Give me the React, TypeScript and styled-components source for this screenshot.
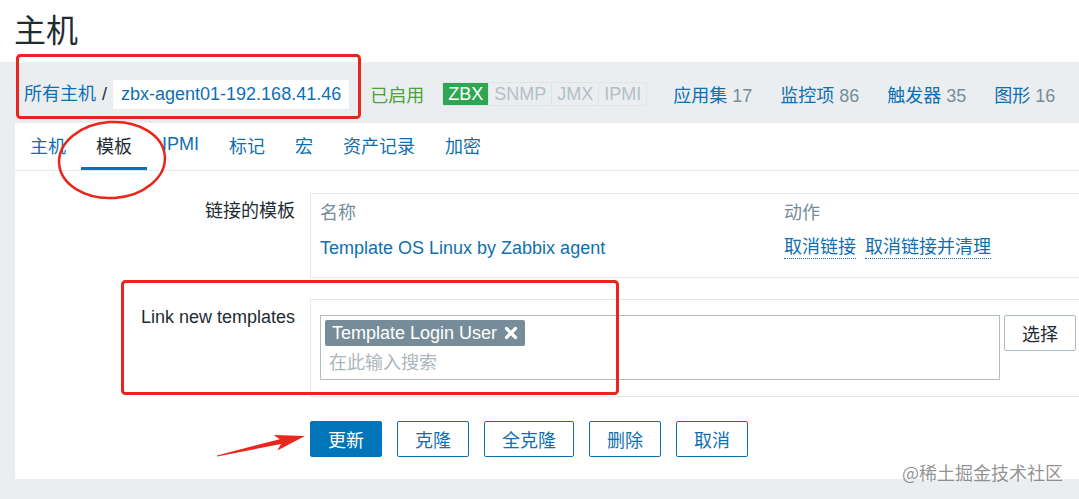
import React from "react";
import styled, { createGlobalStyle } from "styled-components";

const GlobalStyle = createGlobalStyle`
  html, body {
    margin: 0;
    padding: 0;
    background: #ebeef0;
    overflow: hidden;
  }
  body {
    font-family: "Liberation Sans", "Noto Sans CJK SC", sans-serif;
    font-size: 18px;
    color: #1f2c33;
  }
  * { box-sizing: border-box; }
`;

const BLUE = "#0f6fb0";
const GREY = "#768d99";
const LINE = "#e6e9eb";
const RED = "#e8261d";

const Page = styled.div`
  position: relative;
  width: 1079px;
  height: 499px;
  background: #ebeef0;
  overflow: hidden;
`;

const Header = styled.header`
  height: 62px;
  background: #fff;
  display: flex;
  align-items: center;
  padding-left: 14px;
`;

const Title = styled.h1`
  margin: 0;
  font-size: 32px;
  font-weight: 400;
  line-height: 36px;
  color: #1f2c33;
`;

const InfoBar = styled.div`
  height: 61px;
  display: flex;
  align-items: center;
  padding: 3px 0 0 24px;
  white-space: nowrap;
`;

const Link = styled.span`
  color: ${BLUE};
  line-height: 24px;
`;

const Sep = styled.span`
  padding: 0 6px;
  color: #1f2c33;
`;

const HostBox = styled.span`
  background: #fff;
  color: ${BLUE};
  height: 29px;
  line-height: 29px;
  padding: 0 8px;
`;

const Status = styled.span`
  margin-left: 21px;
  color: #4f9f3f;
`;

const Badges = styled.div`
  margin-left: 18px;
  display: flex;
  height: 24px;
  border: 1px solid #dfe4e7;
  border-radius: 2px;
  overflow: hidden;
`;

const Badge = styled.span<{ $on?: boolean }>`
  display: flex;
  align-items: center;
  padding: 0 5px;
  background: ${(p) => (p.$on ? "#2fa752" : "transparent")};
  color: ${(p) => (p.$on ? "#fff" : "#b4c0c6")};
  border-left: ${(p) => (p.$on ? "none" : "1px solid #dfe4e7")};
  line-height: 22px;
`;

const Counts = styled.div`
  display: flex;
  gap: 28px;
  margin-left: 26px;
`;

const Count = styled.span`
  color: ${BLUE};
  & b {
    font-weight: 400;
    color: ${GREY};
    margin-left: 5px;
  }
`;

const Panel = styled.section`
  margin-left: 15px;
  width: 1100px;
  height: 356px;
  background: #fff;
`;

const TabBar = styled.nav`
  display: flex;
  height: 48px;
  border-bottom: 1px solid ${LINE};
`;

const Tab = styled.span<{ $active?: boolean }>`
  position: relative;
  display: flex;
  align-items: center;
  padding: 0 15px 4px;
  color: ${(p) => (p.$active ? "#1f2c33" : BLUE)};
  &::after {
    content: "";
    display: ${(p) => (p.$active ? "block" : "none")};
    position: absolute;
    left: 0;
    right: 0;
    bottom: 0;
    height: 3px;
    background: #0275b8;
  }
`;

const Form = styled.div`
  display: grid;
  grid-template-columns: 280px 1fr;
  column-gap: 15px;
  row-gap: 21px;
  padding-top: 22px;
`;

const Label = styled.div`
  text-align: right;
  padding-top: 6px;
  line-height: 24px;
`;

const Box = styled.div<{ $pad: string }>`
  border: 1px solid ${LINE};
  border-right: none;
  padding: ${(p) => p.$pad};
`;

const Table = styled.div`
  display: grid;
  grid-template-columns: 464px auto;
  row-gap: 11px;
  line-height: 24px;
`;

const Th = styled.span`
  color: ${GREY};
`;

const Actions = styled.span`
  display: flex;
  gap: 9px;
`;

const Dotted = styled.span`
  color: ${BLUE};
  line-height: 22px;
  border-bottom: 1px dotted ${BLUE};
  align-self: flex-start;
`;

const PickRow = styled.div`
  display: flex;
  align-items: flex-start;
`;

const MultiSelect = styled.div`
  flex: none;
  width: 680px;
  border: 1px solid #b3bcc1;
  padding: 4px 5px 4px 4px;
`;

const Tag = styled.span`
  display: inline-flex;
  align-items: center;
  gap: 7px;
  height: 26px;
  padding: 0 7px;
  background: ${GREY};
  color: #fff;
  border-radius: 2px;
`;

const Placeholder = styled.div`
  color: #acb6bb;
  line-height: 24px;
  padding: 5px 0 0 4px;
`;

const Button = styled.button<{ $primary?: boolean }>`
  flex: none;
  height: 36px;
  padding: 0 17px;
  font: inherit;
  font-size: 18px;
  white-space: nowrap;
  border-radius: 2px;
  border: 1px solid ${(p) => (p.$primary ? "#0275b8" : BLUE)};
  background: ${(p) => (p.$primary ? "#0275b8" : "#fff")};
  color: ${(p) => (p.$primary ? "#fff" : BLUE)};
`;

const SelectButton = styled(Button)`
  margin-left: 4px;
  border-color: #acbbc2;
  color: #1f2c33;
`;

const ButtonRow = styled.div`
  display: flex;
  gap: 15px;
  margin-top: 3px;
`;

const Watermark = styled.div`
  position: absolute;
  left: 902px;
  top: 460px;
  font-size: 18px;
  line-height: 24px;
  color: rgba(110, 110, 110, 0.75);
  font-family: "Noto Sans CJK SC", sans-serif;
`;

const Marks = styled.svg`
  position: absolute;
  left: 0;
  top: 0;
  pointer-events: none;
`;

function CloseX() {
  return (
    <svg width="14" height="14" viewBox="0 0 14 14">
      <path d="M2.5 2.5 L11.5 11.5 M11.5 2.5 L2.5 11.5" stroke="#fff" strokeWidth="3.2" strokeLinecap="round" />
    </svg>
  );
}

const tabs = ["主机", "模板", "IPMI", "标记", "宏", "资产记录", "加密"];
const counts: [string, number][] = [
  ["应用集", 17],
  ["监控项", 86],
  ["触发器", 35],
  ["图形", 16],
];

export default function App() {
  return (
    <Page>
      <GlobalStyle />
      <Header>
        <Title>主机</Title>
      </Header>
      <InfoBar>
        <Link>所有主机</Link>
        <Sep>/</Sep>
        <HostBox>zbx-agent01-192.168.41.46</HostBox>
        <Status>已启用</Status>
        <Badges>
          <Badge $on>ZBX</Badge>
          <Badge>SNMP</Badge>
          <Badge>JMX</Badge>
          <Badge>IPMI</Badge>
        </Badges>
        <Counts>
          {counts.map(([name, n]) => (
            <Count key={name}>
              {name}
              <b>{n}</b>
            </Count>
          ))}
        </Counts>
      </InfoBar>
      <Panel>
        <TabBar>
          {tabs.map((t) => (
            <Tab key={t} $active={t === "模板"}>
              {t}
            </Tab>
          ))}
        </TabBar>
        <Form>
          <Label>链接的模板</Label>
          <Box $pad="7px 9px 17px">
            <Table>
              <Th>名称</Th>
              <Th>动作</Th>
              <Link>Template OS Linux by Zabbix agent</Link>
              <Actions>
                <Dotted>取消链接</Dotted>
                <Dotted>取消链接并清理</Dotted>
              </Actions>
            </Table>
          </Box>

          <Label>Link new templates</Label>
          <Box $pad="15px 9px 16px">
            <PickRow>
              <MultiSelect>
                <Tag>
                  Template Login User
                  <CloseX />
                </Tag>
                <Placeholder>在此输入搜索</Placeholder>
              </MultiSelect>
              <SelectButton>选择</SelectButton>
            </PickRow>
          </Box>

          <div />
          <ButtonRow>
            <Button $primary>更新</Button>
            <Button>克隆</Button>
            <Button>全克隆</Button>
            <Button>删除</Button>
            <Button>取消</Button>
          </ButtonRow>
        </Form>
      </Panel>

      <Watermark>@稀土掘金技术社区</Watermark>

      <Marks width="1079" height="499" viewBox="0 0 1079 499">
        <rect x="17.5" y="55.5" width="342" height="62" rx="3" fill="none" stroke={RED} strokeWidth="3" />
        <ellipse cx="112" cy="160" rx="53" ry="38" transform="rotate(-4 112 160)" fill="none" stroke={RED} strokeWidth="2.5" />
        <rect x="122.5" y="281.5" width="495" height="112" rx="3" fill="none" stroke={RED} strokeWidth="3" />
        <polygon
          points="217,456.6 281,444 277.3,450.5 305,436 273.7,434.9 279.8,439.2 217,455.4"
          fill={RED}
        />
      </Marks>
    </Page>
  );
}
